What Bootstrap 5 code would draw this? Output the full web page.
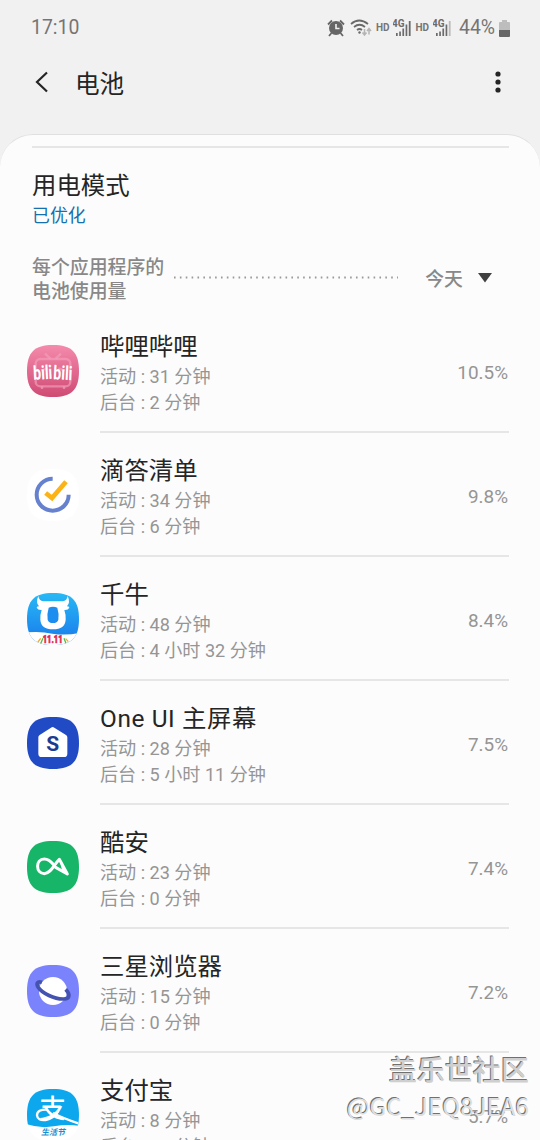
<!DOCTYPE html>
<html lang="zh-CN">
<head>
    <meta charset="UTF-8">
    <meta name="viewport" content="width=device-width, initial-scale=1.0">
    <title>电池</title>
    <link href="https://cdn.jsdelivr.net/npm/bootstrap@5.3.0/dist/css/bootstrap.min.css" rel="stylesheet">
    <style>
        body {
            font-family: Roboto, "Noto Sans CJK SC", sans-serif;
            background-color: #f1f1f1;
            color: #252525;
            height: 1140px;
            overflow: hidden;
        }
        svg {
            display: block;
            flex: none;
        }
        .status-bar {
            height: 54px;
            padding: 2px 30px 0 31px;
            color: #757575;
            font-size: 19.4px;
        }
        .status-hd {
            font-size: 10px;
            font-weight: 700;
            line-height: 12px;
        }
        .title-bar {
            height: 80px;
            padding: 0 36px 24px 34px;
        }
        .title-bar h1 {
            font-size: 24.6px;
            font-weight: 400;
            line-height: 30px;
            margin: 0 0 0 26px;
            padding-top: 5px;
        }
        .panel {
            height: 1006px;
            background-color: #fcfcfc;
            border-top: 1px solid #e0e0e0;
            border-radius: 33px 33px 0 0;
            padding: 11px 31px 0 27px;
            overflow: hidden;
        }
        .panel-rule {
            height: 2px;
            background-color: #e6e6e6;
            margin-left: 5px;
        }
        .mode {
            height: 102px;
            padding: 21px 0 0 5px;
        }
        .item-title {
            font-size: 24.4px;
            line-height: 34px;
        }
        .title-wide {
            letter-spacing: .6px;
        }
        .mode-state {
            color: #1670ae;
            font-size: 17.9px;
            line-height: 26px;
        }
        .usage-head {
            height: 59px;
            padding-left: 5px;
            color: #888;
            font-weight: 500;
            font-size: 18.9px;
            line-height: 24px;
        }
        .usage-label {
            padding-top: 6px;
        }
        .usage-day {
            padding-top: 18px;
        }
        .usage-arrow {
            margin: 23px 17px 0 15px;
        }
        .app-row {
            height: 124px;
        }
        .app-icon {
            width: 52px;
            height: 52px;
            margin: 36px 21px 0 0;
        }
        .app-body {
            border-bottom: 2px solid #e6e6e6;
            padding-top: 21px;
        }
        .app-time {
            color: #959595;
            font-size: 18.1px;
            line-height: 26px;
        }
        .app-percent {
            color: #959595;
            font-size: 18.9px;
            line-height: 28px;
            padding: 29px 1px 0 0;
        }
        .watermark {
            right: 11px;
            top: 1050px;
            text-align: right;
            font-family: "Noto Sans CJK SC", sans-serif;
        }
        .watermark-site {
            color: #cfcfcf;
            text-shadow: -1px -1px 0 #707070;
            font-size: 28px;
            font-weight: 500;
            line-height: 38px;
        }
        .watermark-user {
            color: #dedede;
            text-shadow: -1px -1px 0 #707070;
            font-size: 24.2px;
            line-height: 36px;
        }
    </style>
</head>
<body>

<div class="status-bar d-flex align-items-center">
    <span class="me-auto">17:10</span>
    <svg width="18" height="18" viewBox="0 0 18 18" fill="none" stroke="#666" stroke-width="1.8">
        <circle cx="9" cy="9" r="7" fill="#666" stroke="none"/>
        <path d="M1 5.5L5 1.5M17 5.5L13 1.5M4.5 14L2 17M13.5 14L16 17"/>
        <path d="M9 5v4.500h3.500" stroke="#f1f1f1" stroke-width="1.600"/>
    </svg>
    <svg class="ms-1" width="23" height="18" viewBox="0 0 23 18" fill="none" stroke="#696969" stroke-width="1.7">
        <path d="M2 5Q10-2 19 5M5 8Q10.500 3.500 16 8M8 11Q10.500 9 13 11"/>
        <circle cx="10.500" cy="13.500" r="1.200" fill="#696969" stroke="none"/>
        <path d="M15.500 10v6M13.500 13.500l2 2.500 2-2.500M20 15.500v-6M18 12l2-2.500 2 2.500" stroke="#b5b5b5" stroke-width="1.500"/>
    </svg>
    <span class="status-hd ms-1">HD</span>
    <svg width="22" height="18" viewBox="0 0 22 18" class="ms-1" fill="#6b6b6b">
        <text x="-1" y="8" font-size="10" font-weight="700">4G</text>
        <path d="M3 14h1.700v3H3zM6.200 12.500h1.700V17H6.200zM9.400 9.500h1.700V17H9.400zM12.600 5.500h1.700V17h-1.700zM15.800 2h1.800v15h-1.800z"/>
    </svg>
    <span class="status-hd">HD</span>
    <svg width="22" height="18" viewBox="0 0 22 18" class="ms-1" fill="#6b6b6b">
        <text x="-1" y="8" font-size="10" font-weight="700">4G</text>
        <path d="M3 14h1.700v3H3zM6.200 12.500h1.700V17H6.200zM9.400 9.500h1.700V17H9.400zM12.600 5.500h1.700V17h-1.700z"/>
        <path fill="#bbb" d="M15.800 2h1.800v15h-1.800z"/>
    </svg>
    <span class="ms-1">44%</span>
    <svg class="ms-1" width="11" height="17" viewBox="0 0 11 17">
        <path fill="#bdbdbd" d="M3 0h5v2h2q1 0 1 1v7H0V3q0-1 1-1h2z"/>
        <path fill="#666" d="M0 10h11v6q0 1-1 1H1q-1 0-1-1z"/>
    </svg>
</div>

<div class="title-bar d-flex align-items-center">
    <svg width="15" height="22" viewBox="0 0 15 22" fill="none" stroke="#252525" stroke-width="2.200">
        <path d="M13 1.500L3 11l10 9.500"/>
    </svg>
    <h1 class="me-auto">电池</h1>
    <svg width="12" height="22" viewBox="0 0 12 22" fill="#252525">
        <circle cx="6" cy="3" r="2.600"/>
        <circle cx="6" cy="11" r="2.600"/>
        <circle cx="6" cy="19" r="2.600"/>
    </svg>
</div>

<main class="panel">
    <div class="panel-rule"></div>
    <div class="mode">
        <div class="item-title">用电模式</div>
        <div class="mode-state">已优化</div>
    </div>

    <div class="usage-head d-flex">
        <div class="usage-label">每个应用程序的<br>电池使用量</div>
        <svg class="mt-4 ms-2" width="228" height="8" viewBox="0 0 228 8">
            <path d="M2 3.500H226" stroke="#999" stroke-width="1.800" stroke-dasharray="1.600 4.270"/>
        </svg>
        <div class="usage-day ms-auto">今天</div>
        <svg class="usage-arrow" width="14" height="10" viewBox="0 0 14 10">
            <path d="M0 0h14L7 9.500z" fill="#404040"/>
        </svg>
    </div>

    <div class="app-row d-flex">
        <svg class="app-icon" viewBox="0 0 156 156">
            <defs>
                <linearGradient id="pink" x2="0" y2="1">
                    <stop stop-color="#f48bac"/>
                    <stop offset="1" stop-color="#cf4a74"/>
                </linearGradient>
            </defs>
            <path fill="url(#pink)" d="M78 0C134 0 156 22 156 78S134 156 78 156 0 134 0 78 22 0 78 0Z"/>
            <g fill="none" stroke="#f2a0ba" stroke-opacity=".65" stroke-width="7">
                <rect x="26" y="42" width="104" height="82" rx="14"/>
                <path d="M54 26l16 15M102 26L86 41M45 124v8M111 124v8M42 76l20-6M114 76l-20-6"/>
            </g>
            <g fill="#fff" font-size="58" font-weight="700">
                <text x="19" y="103" textLength="57" lengthAdjust="spacingAndGlyphs" transform="rotate(-3 47 90)">bili</text>
                <text x="79" y="104" textLength="57" lengthAdjust="spacingAndGlyphs" transform="rotate(3 107 90)">bili</text>
            </g>
        </svg>
        <div class="app-body d-flex flex-grow-1">
            <div class="me-auto">
                <div class="item-title">哔哩哔哩</div>
                <div class="app-time">活动 : 31 分钟</div>
                <div class="app-time">后台 : 2 分钟</div>
            </div>
            <div class="app-percent">10.5%</div>
        </div>
    </div>

    <div class="app-row d-flex">
        <svg class="app-icon" viewBox="0 0 156 156">
            <path fill="#fff" d="M78 0C134 0 156 22 156 78S134 156 78 156 0 134 0 78 22 0 78 0Z"/>
            <path d="M77 29A48 48 0 1 0 125 77" fill="none" stroke="#6681ce" stroke-width="12"/>
            <path d="M56 72l19 15 42-49" fill="none" stroke="#fbb316" stroke-width="14"/>
        </svg>
        <div class="app-body d-flex flex-grow-1">
            <div class="me-auto">
                <div class="item-title">滴答清单</div>
                <div class="app-time">活动 : 34 分钟</div>
                <div class="app-time">后台 : 6 分钟</div>
            </div>
            <div class="app-percent">9.8%</div>
        </div>
    </div>

    <div class="app-row d-flex">
        <svg class="app-icon" viewBox="0 0 156 156">
            <defs>
                <linearGradient id="sky" x2="0" y2="1">
                    <stop stop-color="#28b9f5"/>
                    <stop offset="1" stop-color="#1878eb"/>
                </linearGradient>
                <clipPath id="tile">
                    <path d="M78 0C134 0 156 22 156 78S134 156 78 156 0 134 0 78 22 0 78 0Z"/>
                </clipPath>
            </defs>
            <g clip-path="url(#tile)">
                <path fill="url(#sky)" d="M0 0h156v156H0z"/>
                <path fill="#fff" d="M0 118q42-4 76 4 42 6 80-2v36H0z"/>
                <path fill="#fff" d="M34 9q-9 20 2 31-6 0-7 4 4 8 15 7-5 14-4 29 2 29 38 29t38-29q1-15-4-29 11 1 15-7-1-4-7-4 11-11 2-31-2 14-15 16H49Q36 23 34 9z"/>
                <path fill="#1d8def" d="M65 44q13-6 26 0 6 20 3 36-3 10-16 10T62 80q-3-16 3-36z"/>
                <path d="M40 154l8-18M118 154l-7-18" stroke="#53b957" stroke-width="4"/>
                <path d="M32 148l9-12M124 146l-8-9" stroke="#f5a72c" stroke-width="4"/>
                <text x="47" y="151" fill="#e2264d" stroke="#e2264d" stroke-width="2" font-size="32" font-weight="900" textLength="60" lengthAdjust="spacingAndGlyphs">11.11</text>
            </g>
        </svg>
        <div class="app-body d-flex flex-grow-1">
            <div class="me-auto">
                <div class="item-title">千牛</div>
                <div class="app-time">活动 : 48 分钟</div>
                <div class="app-time">后台 : 4 小时 32 分钟</div>
            </div>
            <div class="app-percent">8.4%</div>
        </div>
    </div>

    <div class="app-row d-flex">
        <svg class="app-icon" viewBox="0 0 156 156">
            <path fill="#214bc5" d="M78 0C134 0 156 22 156 78S134 156 78 156 0 134 0 78 22 0 78 0Z"/>
            <path fill="#fff" d="M72 32q5-4 10 0l35 22q4 3 4 7v49q0 10-10 10H44q-10 0-10-10V61q0-4 4-7z"/>
            <text x="77" y="103" fill="#1b3d91" font-size="63" font-weight="700" text-anchor="middle">S</text>
        </svg>
        <div class="app-body d-flex flex-grow-1">
            <div class="me-auto">
                <div class="item-title title-wide">One UI 主屏幕</div>
                <div class="app-time">活动 : 28 分钟</div>
                <div class="app-time">后台 : 5 小时 11 分钟</div>
            </div>
            <div class="app-percent">7.5%</div>
        </div>
    </div>

    <div class="app-row d-flex">
        <svg class="app-icon" viewBox="0 0 156 156">
            <path fill="#17b567" d="M78 0C134 0 156 22 156 78S134 156 78 156 0 134 0 78 22 0 78 0Z"/>
            <path d="M80 71C69 58 61 54 52 54 25 54 25 98 52 98 72 98 82 69 97 55L121 99 86 79" fill="none" stroke="#fff" stroke-width="9" stroke-linejoin="round" stroke-linecap="round"/>
            <path fill="#fff" d="M97 55l26 46-17-10z"/>
        </svg>
        <div class="app-body d-flex flex-grow-1">
            <div class="me-auto">
                <div class="item-title">酷安</div>
                <div class="app-time">活动 : 23 分钟</div>
                <div class="app-time">后台 : 0 分钟</div>
            </div>
            <div class="app-percent">7.4%</div>
        </div>
    </div>

    <div class="app-row d-flex">
        <svg class="app-icon" viewBox="0 0 156 156">
            <path fill="#7a83fb" d="M78 0C134 0 156 22 156 78S134 156 78 156 0 134 0 78 22 0 78 0Z"/>
            <circle cx="78" cy="78" r="42" fill="#fff"/>
            <path d="M45 52C31 47 27 56 33 66 45 85 83 103 110 102 132 102 128 85 116 73" fill="none" stroke="#4453b0" stroke-width="11"/>
        </svg>
        <div class="app-body d-flex flex-grow-1">
            <div class="me-auto">
                <div class="item-title">三星浏览器</div>
                <div class="app-time">活动 : 15 分钟</div>
                <div class="app-time">后台 : 0 分钟</div>
            </div>
            <div class="app-percent">7.2%</div>
        </div>
    </div>

    <div class="app-row d-flex">
        <svg class="app-icon" viewBox="0 0 156 156">
            <g clip-path="url(#tile)">
                <path fill="#fff" d="M0 0h156v156H0z"/>
                <path fill="#0ca7ed" d="M0 0h156v110q-37-5-76 2-40 7-80-6z"/>
                <text x="77" y="88" fill="#fff" font-size="80" font-weight="500" text-anchor="middle">支</text>
                <path d="M62 62Q30 60 30 79q2 17 26 14 24-5 38-27M78 72q30 16 76 31" fill="none" stroke="#fff" stroke-width="7"/>
                <text x="78" y="138" fill="#168fd0" font-size="24" font-weight="700" font-style="italic" text-anchor="middle">生活节</text>
            </g>
        </svg>
        <div class="app-body d-flex flex-grow-1">
            <div class="me-auto">
                <div class="item-title">支付宝</div>
                <div class="app-time">活动 : 8 分钟</div>
                <div class="app-time">后台 : 44 分钟</div>
            </div>
            <div class="app-percent">5.7%</div>
        </div>
    </div>
</main>

<div class="watermark position-absolute">
    <div class="watermark-site">盖乐世社区</div>
    <div class="watermark-user">@GC_JEQ8JEA6</div>
</div>

<script src="https://cdn.jsdelivr.net/npm/bootstrap@5.3.0/dist/js/bootstrap.bundle.min.js"></script>
</body>
</html>
